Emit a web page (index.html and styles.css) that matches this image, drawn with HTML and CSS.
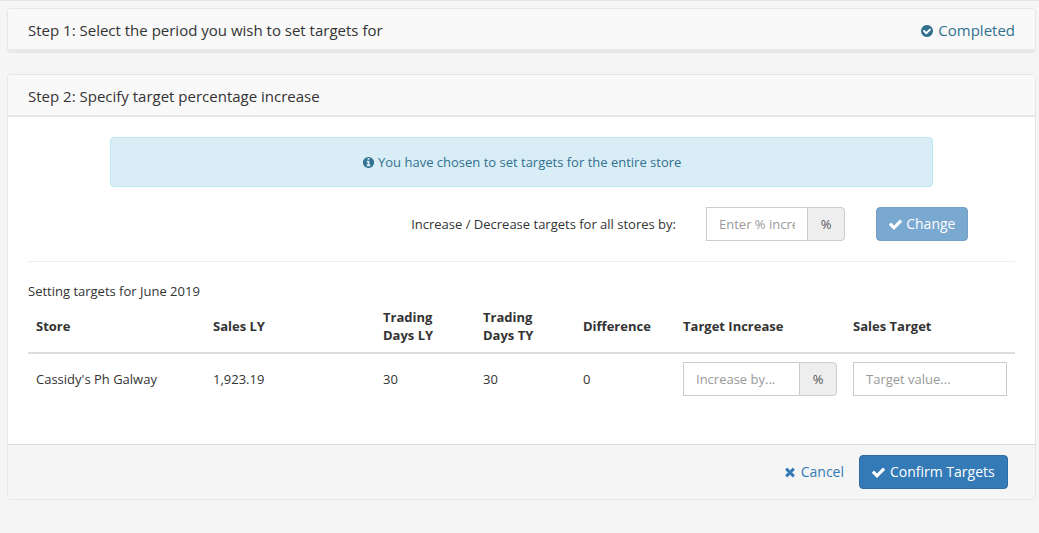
FILE: index.html
```html
<!DOCTYPE html>
<html lang="en">

<head>
    <meta charset="UTF-8">
    <title>Set Targets</title>
    <link rel="stylesheet" href="styles.css">
</head>

<body>
    <div class="panel panel-first">
        <div class="panel-heading heading-split">
            <span>Step 1: Select the period you wish to set targets for</span>
            <span class="completed">
                <svg class="icon" viewBox="0 0 1792 1792"><path d="M1412 734q0-28-18-46l-91-90q-19-19-45-19t-45 19l-408 407-226-226q-19-19-45-19t-45 19l-91 90q-18 18-18 46 0 27 18 45l362 362q19 19 45 19 27 0 46-19l543-543q18-18 18-45zm252 162q0 209-103 385.500t-279.500 279.500-385.500 103-385.500-103-279.500-279.500-103-385.500 103-385.500 279.500-279.500 385.500-103 385.500 103 279.500 279.500 103 385.500z"/></svg>
                Completed
            </span>
        </div>
    </div>

    <div class="panel">
        <div class="panel-heading">Step 2: Specify target percentage increase</div>
        <div class="panel-body">
            <div class="alert">
                <svg class="icon icon-sm" viewBox="0 0 1792 1792"><path d="M1152 1376v-160q0-14-9-23t-23-9h-96v-512q0-14-9-23t-23-9h-320q-14 0-23 9t-9 23v160q0 14 9 23t23 9h96v320h-96q-14 0-23 9t-9 23v160q0 14 9 23t23 9h448q14 0 23-9t9-23zm-128-896v-160q0-14-9-23t-23-9h-192q-14 0-23 9t-9 23v160q0 14 9 23t23 9h192q14 0 23-9t9-23zm640 416q0 209-103 385.500t-279.500 279.500-385.500 103-385.500-103-279.500-279.500-103-385.500 103-385.500 279.500-279.500 385.500-103 385.500 103 279.500 279.500 103 385.500z"/></svg>
                You have chosen to set targets for the entire store
            </div>

            <div class="bulk-row">
                <label class="bulk-label" for="bulk">Increase / Decrease targets for all stores by:</label>
                <div class="input-group bulk-group">
                    <input class="form-control" id="bulk" type="text" placeholder="Enter % increase">
                    <span class="addon addon-bulk">%</span>
                </div>
                <button class="btn btn-disabled" type="button">
                    <svg class="icon icon-check" viewBox="0 0 1792 1792"><path d="M1671 566q0 40-28 68l-724 724-136 136q-28 28-68 28t-68-28l-136-136-362-362q-28-28-28-68t28-68l136-136q28-28 68-28t68 28l294 295 656-657q28-28 68-28t68 28l136 136q28 28 28 68z"/></svg>
                    Change
                </button>
            </div>

            <hr>

            <p class="caption">Setting targets for June 2019</p>
            <table class="targets">
                <thead>
                    <tr>
                        <th class="col-store">Store</th>
                        <th class="col-sales">Sales LY</th>
                        <th class="col-days">Trading<br>Days LY</th>
                        <th class="col-days">Trading<br>Days TY</th>
                        <th class="col-days">Difference</th>
                        <th class="col-sales">Target Increase</th>
                        <th class="col-sales">Sales Target</th>
                    </tr>
                </thead>
                <tbody>
                    <tr>
                        <td>Cassidy's Ph Galway</td>
                        <td>1,923.19</td>
                        <td>30</td>
                        <td>30</td>
                        <td>0</td>
                        <td>
                            <div class="input-group">
                                <input class="form-control" type="text" placeholder="Increase by...">
                                <span class="addon">%</span>
                            </div>
                        </td>
                        <td><input class="form-control" type="text" placeholder="Target value..."></td>
                    </tr>
                </tbody>
            </table>
        </div>
        <div class="panel-footer">
            <a class="cancel" href="#">
                <svg class="icon" viewBox="0 0 1792 1792"><path d="M1490 1322q0 40-28 68l-136 136q-28 28-68 28t-68-28l-294-294-294 294q-28 28-68 28t-68-28l-136-136q-28-28-28-68t28-68l294-294-294-294q-28-28-28-68t28-68l136-136q28-28 68-28t68 28l294 294 294-294q28-28 68-28t68 28l136 136q28 28 28 68t-28 68l-294 294 294 294q28 28 28 68z"/></svg>
                Cancel
            </a>
            <button class="btn btn-primary" type="button">
                <svg class="icon icon-check" viewBox="0 0 1792 1792"><path d="M1671 566q0 40-28 68l-724 724-136 136q-28 28-68 28t-68-28l-136-136-362-362q-28-28-28-68t28-68l136-136q28-28 68-28t68 28l294 295 656-657q28-28 68-28t68 28l136 136q28 28 28 68z"/></svg>
                Confirm Targets
            </button>
        </div>
    </div>
</body>

</html>
```

FILE: styles.css
```css
* {
    box-sizing: border-box;
}

body {
    font-family: 'Open Sans', sans-serif;
    font-size: 13px;
    line-height: 1.42857;
    color: #333;
    background-color: #f5f5f5;
    margin: 0;
    padding: 8px 3px 33px 8px;
    border-top: 1px solid #e7e7e7;
    overflow: hidden;
}

.panel {
    background: #fff;
    border: 1px solid #e6e6e6;
    border-radius: 4px;
    margin-left: -1px;
}

.panel-first {
    margin-top: -1px;
    margin-bottom: 22px;
    box-shadow: 0 1px 1px rgba(0, 0, 0, 0.05);
}

.panel-heading {
    background-color: #f9f9f9;
    border-bottom: 2px solid #e9e9e9;
    border-radius: 3px 3px 0 0;
    font-size: 15px;
    line-height: 20px;
    padding: 11px 20px 9px;
}

.heading-split {
    display: flex;
    justify-content: space-between;
    align-items: center;
}

.completed {
    color: #31708f;
}

.icon {
    width: 14px;
    height: 14px;
    fill: currentColor;
    vertical-align: -2px;
}

.icon-sm {
    width: 13px;
    height: 13px;
    vertical-align: -2px;
}

.icon-check {
    width: 15px;
    height: 15px;
    margin-left: -1px;
    vertical-align: -3px;
}

.panel-body {
    padding: 20px 20px 40px;
}

.alert {
    background-color: #d9edf7;
    border: 1px solid #bce8f1;
    border-radius: 4px;
    color: #31708f;
    text-align: center;
    margin: 0 82px 20px;
    padding: 15px;
    height: 50px;
    line-height: 18px;
}

.bulk-row {
    display: flex;
    justify-content: flex-end;
    align-items: center;
    padding-right: 47px;
}

.bulk-label {
    margin-right: 30px;
}

.input-group {
    display: flex;
}

.bulk-group {
    width: 139px;
    margin-right: 31px;
}

.form-control {
    display: block;
    width: 100%;
    min-width: 0;
    height: 34px;
    padding: 6px 12px;
    font-family: inherit;
    font-size: 13px;
    color: #555;
    background: #fff;
    border: 1px solid #ccc;
    outline: none;
}

.form-control::placeholder {
    color: #999;
    opacity: 1;
}

.input-group .form-control {
    border-right: 0;
}

.addon {
    flex: none;
    width: 38px;
    height: 34px;
    line-height: 32px;
    text-align: center;
    color: #555;
    background-color: #eee;
    border: 1px solid #ccc;
    border-radius: 0 4px 4px 0;
}

.btn {
    font-family: inherit;
    font-size: 14px;
    line-height: 20px;
    color: #fff;
    border: 1px solid #2e6da4;
    border-radius: 4px;
    padding: 6px 12px;
    height: 34px;
    cursor: pointer;
}

.btn-disabled {
    width: 92px;
    padding: 6px 0;
    background-color: #337ab7;
    opacity: 0.65;
}

.btn-primary {
    width: 149px;
    padding: 6px 0;
    background-color: #337ab7;
}

hr {
    border: 0;
    border-top: 1px solid #eee;
    margin: 20px 0 21px;
}

.caption {
    margin: 0;
    line-height: 17px;
}

.targets {
    width: 100%;
    border-collapse: collapse;
    table-layout: fixed;
}

.col-store {
    width: 177px;
}

.col-sales {
    width: 170px;
}

.col-days {
    width: 100px;
}

.targets th {
    text-align: left;
    font-weight: 700;
    padding: 8px;
    border-bottom: 2px solid #ddd;
    line-height: 18px;
}

.targets td {
    padding: 8px;
    vertical-align: middle;
}

.panel-footer {
    display: flex;
    justify-content: flex-end;
    align-items: center;
    gap: 15px;
    height: 55px;
    padding: 0 27px 0 0;
    background-color: #f5f5f5;
    border-top: 1px solid #ddd;
    border-radius: 0 0 3px 3px;
}

.cancel {
    color: #337ab7;
    font-size: 14px;
    text-decoration: none;
}
```
